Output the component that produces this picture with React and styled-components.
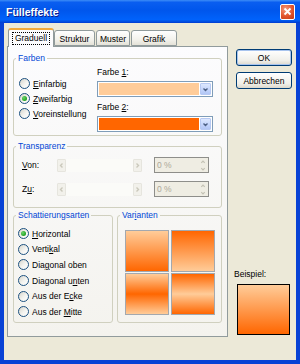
import React from "react";
import styled, { createGlobalStyle } from "styled-components";

const LIGHT = "#FFCC99";
const DARK = "#FF6600";

const GlobalStyle = createGlobalStyle`
  * { box-sizing: border-box; }
  body {
    margin: 0;
    font-family: "Liberation Sans", Arial, sans-serif;
    font-size: 8.5px;
    color: #000000;
  }
  u { text-decoration-thickness: 1px; text-underline-offset: 1px; }
`;

const Window = styled.div`
  width: 300px;
  height: 364px;
  display: flex;
  flex-direction: column;
  overflow: hidden;
  background: #0842d5;
`;

const TitleBar = styled.div`
  height: 23px;
  flex-shrink: 0;
  display: flex;
  align-items: center;
  justify-content: space-between;
  padding: 0 5px 0 6px;
  background: linear-gradient(
    to bottom,
    #3d8df7 0%,
    #0a5ef0 10%,
    #0056ec 45%,
    #0062fb 85%,
    #004ee0 94%,
    #0039cf 100%
  );
`;

const Title = styled.div`
  color: #ffffff;
  font-weight: bold;
  font-size: 10.5px;
  text-shadow: 1px 1px 0 #0a1c8c;
`;

const CloseButton = styled.div`
  width: 15px;
  height: 16px;
  border: 1px solid #ffffff;
  border-radius: 2px;
  background: radial-gradient(circle at 35% 30%, #f39a7c 0%, #e2542c 55%, #c13a15 100%);
  display: flex;
  align-items: center;
  justify-content: center;
`;

const Frame = styled.div`
  flex: 1;
  display: flex;
  background: #ece9d8;
  border: 4px solid #0842d5;
  border-top: none;
  padding: 5px 0 0 3px;
`;

const LeftCol = styled.div`
  width: 221px;
  display: flex;
  flex-direction: column;
`;

const TabRow = styled.div`
  height: 18px;
  display: flex;
  align-items: flex-end;
  padding-left: 1px;
  position: relative;
  z-index: 1;
`;

const Tab = styled.div`
  width: ${(p) => p.$w}px;
  margin-right: ${(p) => p.$gap || 0}px;
  height: ${(p) => (p.$active ? 19 : 16)}px;
  margin-bottom: ${(p) => (p.$active ? -1 : 0)}px;
  display: flex;
  align-items: center;
  justify-content: center;
  border: 1px solid #919b9c;
  border-bottom: ${(p) => (p.$active ? "none" : "1px solid #919b9c")};
  border-top: ${(p) => (p.$active ? "2px solid #f2a93b" : "1px solid #919b9c")};
  border-radius: 3px 3px 0 0;
  background: ${(p) =>
    p.$active ? "#fcfcfe" : "linear-gradient(to bottom, #ffffff, #f3f2ec 60%, #e4e2d8)"};
  padding-top: ${(p) => (p.$active ? 0 : 1)}px;
`;

const FocusText = styled.span`
  outline: 1px dotted #000000;
  padding: 0 2px;
  line-height: 11px;
`;

const Panel = styled.div`
  height: 291px;
  border: 1px solid #919b9c;
  background: linear-gradient(to bottom, #fcfcfe, #f4f3ee);
  padding: 5px 5px 0;
  display: flex;
  flex-direction: column;
`;

const Group = styled.fieldset`
  margin: ${(p) => p.$mt || 0}px 0 0;
  padding: 0;
  min-width: 0;
  width: ${(p) => (p.$w ? `${p.$w}px` : "auto")};
  height: ${(p) => p.$h}px;
  border: 1px solid #d0d0bf;
  border-radius: 3px;
`;

const Legend = styled.legend`
  margin-left: 2px;
  padding: 0 2px;
  color: #0046d5;
  line-height: 12px;
  font-size: 8.5px;
`;

const FarbenBody = styled.div`
  display: flex;
  padding: 1px 0 0 5px;
`;

const RadioCol = styled.div`
  width: ${(p) => p.$w}px;
  padding-top: ${(p) => p.$pt}px;
  padding-left: ${(p) => p.$pl || 0}px;
  display: flex;
  flex-direction: column;
`;

const RadioRow = styled.label`
  height: ${(p) => p.$h}px;
  display: flex;
  align-items: center;
  gap: 3px;
  white-space: nowrap;
`;

const RadioCircle = styled.span`
  width: 11px;
  height: 11px;
  flex-shrink: 0;
  border-radius: 50%;
  border: 1px solid #1c5180;
  background: linear-gradient(135deg, #d6d5cc 0%, #f4f4f0 55%, #ffffff 100%);
  display: flex;
  align-items: center;
  justify-content: center;
`;

const RadioDot = styled.span`
  width: 5px;
  height: 5px;
  border-radius: 50%;
  background: radial-gradient(circle at 35% 35%, #6ad46a, #21a121 70%);
`;

const ColorCol = styled.div`
  display: flex;
  flex-direction: column;
`;

const FieldLabel = styled.div`
  line-height: 13px;
  margin-top: ${(p) => p.$mt || 0}px;
`;

const ColorCombo = styled.div`
  width: 116px;
  height: 16px;
  margin-top: 2px;
  border: 1px solid #7f9db9;
  background: #ffffff;
  padding: 1px;
  display: flex;
  gap: 1px;
`;

const Swatch = styled.div`
  flex: 1;
  background: ${(p) => p.$color};
`;

const ComboButton = styled.div`
  width: 11px;
  border: 1px solid #b7c9f2;
  border-radius: 1px;
  background: linear-gradient(to bottom, #dde8fe, #c3d4fb 60%, #b2c6f5);
  display: flex;
  align-items: center;
  justify-content: center;
`;

const TransBody = styled.div`
  display: flex;
  flex-direction: column;
  gap: 8px;
  padding: 5px 0 0 8px;
`;

const SliderRow = styled.div`
  height: 16px;
  display: flex;
  align-items: center;
`;

const RowLabel = styled.div`
  width: 35px;
`;

const Slider = styled.div`
  width: 85px;
  height: 13px;
  display: flex;
  background: #fbfbf8;
`;

const SliderTrack = styled.div`
  flex: 1;
`;

const ScrollBtn = styled.div`
  width: 9px;
  height: 13px;
  border: 1px solid #e6e5de;
  border-radius: 1px;
  background: #f2f1eb;
  display: flex;
  align-items: center;
  justify-content: center;
`;

const Spinner = styled.div`
  width: 55px;
  height: 16px;
  margin-left: 12px;
  border: 1px solid #8e8e8a;
  background: #efede3;
  display: flex;
  align-items: center;
`;

const SpinText = styled.div`
  flex: 1;
  padding-left: 2px;
  color: #aca899;
`;

const SpinArrows = styled.div`
  width: 9px;
  height: 14px;
  margin-right: 1px;
  display: flex;
  flex-direction: column;
  align-items: center;
  justify-content: space-around;
`;

const BottomRow = styled.div`
  display: flex;
  gap: 4px;
  margin-top: 1px;
`;

const VariantGrid = styled.div`
  display: grid;
  grid-template-columns: 44px 44px;
  grid-template-rows: 42px 42px;
  gap: 1px 2px;
  padding: 9px 0 0 7px;
`;

const VariantTile = styled.div`
  border: 1px solid #a3a8ae;
  background: ${(p) => p.$bg};
`;

const SideCol = styled.div`
  width: 56px;
  margin-left: 8px;
  padding-top: 21px;
  display: flex;
  flex-direction: column;
`;

const Button = styled.div`
  height: 17px;
  margin-top: ${(p) => p.$mt || 0}px;
  border: 1px solid #003c74;
  border-radius: 3px;
  background: linear-gradient(to bottom, #ffffff, #f0efe9 70%, #dcd8cc);
  box-shadow: ${(p) => (p.$default ? "inset 0 0 0 1px #a8c4ee" : "none")};
  display: flex;
  align-items: center;
  justify-content: center;
`;

const PreviewLabel = styled.div`
  margin-top: 179px;
  margin-left: -2px;
  line-height: 12px;
`;

const Preview = styled.div`
  width: 53px;
  height: 51px;
  margin: 4px 0 0 1px;
  border: 1px solid #000000;
  background: linear-gradient(to bottom, ${LIGHT}, ${DARK});
`;

const Chevron = ({ dir = "down", color = "#4d6185", size = 7 }) => {
  const paths = {
    down: "M1.5 2.5 L3.5 4.5 L5.5 2.5",
    up: "M1.5 4.5 L3.5 2.5 L5.5 4.5",
    left: "M4.5 1.5 L2.5 3.5 L4.5 5.5",
    right: "M2.5 1.5 L4.5 3.5 L2.5 5.5",
  };
  return (
    <svg width={size} height={size} viewBox="0 0 7 7">
      <path d={paths[dir]} fill="none" stroke={color} strokeWidth="1.4" />
    </svg>
  );
};

const Radio = ({ checked, h, children }) => (
  <RadioRow $h={h}>
    <RadioCircle>{checked && <RadioDot />}</RadioCircle>
    <span>{children}</span>
  </RadioRow>
);

const ColorBox = ({ color }) => (
  <ColorCombo>
    <Swatch $color={color} />
    <ComboButton>
      <Chevron dir="down" />
    </ComboButton>
  </ColorCombo>
);

const SliderField = ({ label }) => (
  <SliderRow>
    <RowLabel>{label}</RowLabel>
    <Slider>
      <ScrollBtn>
        <Chevron dir="left" color="#cac8bb" />
      </ScrollBtn>
      <SliderTrack />
      <ScrollBtn>
        <Chevron dir="right" color="#cac8bb" />
      </ScrollBtn>
    </Slider>
    <Spinner>
      <SpinText>0 %</SpinText>
      <SpinArrows>
        <Chevron dir="up" color="#c3c1b4" size={6} />
        <Chevron dir="down" color="#c3c1b4" size={6} />
      </SpinArrows>
    </Spinner>
  </SliderRow>
);

const variants = [
  `linear-gradient(to bottom, ${LIGHT}, ${DARK})`,
  `linear-gradient(to bottom, ${DARK}, ${LIGHT})`,
  `linear-gradient(to bottom, ${LIGHT}, ${DARK} 50%, ${LIGHT})`,
  `linear-gradient(to bottom, ${DARK}, ${LIGHT} 50%, ${DARK})`,
];

const App = () => {
  return (
    <>
      <GlobalStyle />
      <Window>
        <TitleBar>
          <Title>Fülleffekte</Title>
          <CloseButton>
            <svg width="9" height="9" viewBox="0 0 9 9">
              <path d="M1.5 1.5 L7.5 7.5 M7.5 1.5 L1.5 7.5" stroke="#ffffff" strokeWidth="1.8" />
            </svg>
          </CloseButton>
        </TitleBar>
        <Frame>
          <LeftCol>
            <TabRow>
              <Tab $active $w={46}>
                <FocusText>Graduell</FocusText>
              </Tab>
              <Tab $w={41} $gap={1}>Struktur</Tab>
              <Tab $w={34} $gap={1}>Muster</Tab>
              <Tab $w={46}>Grafik</Tab>
            </TabRow>
            <Panel>
              <Group $h={84}>
                <Legend>Farben</Legend>
                <FarbenBody>
                  <RadioCol $w={78} $pt={11}>
                    <Radio h={15}><u>E</u>infarbig</Radio>
                    <Radio h={15} checked><u>Z</u>weifarbig</Radio>
                    <Radio h={15}><u>V</u>oreinstellung</Radio>
                  </RadioCol>
                  <ColorCol>
                    <FieldLabel $mt={1}>Farbe <u>1</u>:</FieldLabel>
                    <ColorBox color={LIGHT} />
                    <FieldLabel $mt={4}>Farbe <u>2</u>:</FieldLabel>
                    <ColorBox color={DARK} />
                  </ColorCol>
                </FarbenBody>
              </Group>

              <Group $h={68} $mt={4}>
                <Legend>Transparenz</Legend>
                <TransBody>
                  <SliderField label={<><u>V</u>on:</>} />
                  <SliderField label={<>Z<u>u</u>:</>} />
                </TransBody>
              </Group>

              <BottomRow>
                <Group $w={100} $h={114}>
                  <Legend>Schattierungsarten</Legend>
                  <RadioCol $w={98} $pt={5} $pl={4}>
                    <Radio h={15.6} checked><u>H</u>orizontal</Radio>
                    <Radio h={15.6}>Verti<u>k</u>al</Radio>
                    <Radio h={15.6}>Dia<u>g</u>onal oben</Radio>
                    <Radio h={15.6}>Diagonal u<u>n</u>ten</Radio>
                    <Radio h={15.6}>Aus der E<u>c</u>ke</Radio>
                    <Radio h={15.6}>Aus der <u>M</u>itte</Radio>
                  </RadioCol>
                </Group>
                <Group $w={105} $h={114}>
                  <Legend>Var<u>i</u>anten</Legend>
                  <VariantGrid>
                    {variants.map((bg, i) => (
                      <VariantTile key={i} $bg={bg} />
                    ))}
                  </VariantGrid>
                </Group>
              </BottomRow>
            </Panel>
          </LeftCol>

          <SideCol>
            <Button $default>OK</Button>
            <Button $mt={6}>Abbrechen</Button>
            <PreviewLabel>Beispiel:</PreviewLabel>
            <Preview />
          </SideCol>
        </Frame>
      </Window>
    </>
  );
};

export default App;
